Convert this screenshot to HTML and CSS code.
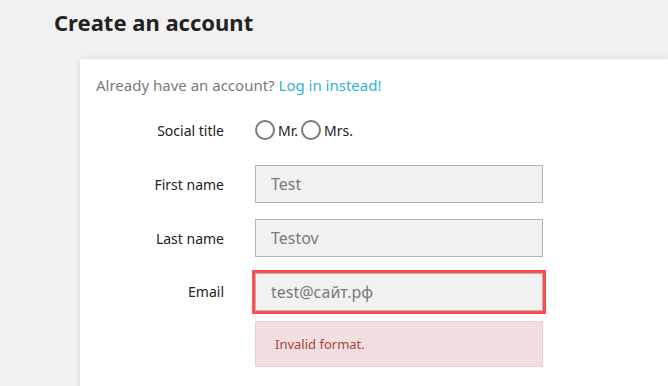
FILE: index.html
```html
<!DOCTYPE html>
<html lang="en">
<head>
<meta charset="utf-8">
<title>Create an account</title>
<link rel="stylesheet" href="styles.css">
</head>
<body>
<main class="page">
  <h1 class="page-title">Create an account</h1>
  <section class="card">
    <p class="login-hint">Already have an account? <a href="#" class="link">Log in instead!</a></p>
    <form class="form">
      <div class="row">
        <label class="label">Social title</label>
        <div class="field radios">
          <label class="radio"><span class="radio-dot"></span>Mr.</label>
          <label class="radio"><span class="radio-dot"></span>Mrs.</label>
        </div>
      </div>
      <div class="row">
        <label class="label">First name</label>
        <div class="field"><input class="input" type="text" value="Test"></div>
      </div>
      <div class="row">
        <label class="label">Last name</label>
        <div class="field"><input class="input" type="text" value="Testov"></div>
      </div>
      <div class="row row-email">
        <label class="label">Email</label>
        <div class="field">
          <input class="input input-error" type="text" value="test@сайт.рф">
          <div class="alert">Invalid format.</div>
        </div>
      </div>
    </form>
  </section>
</main>
</body>
</html>
```

FILE: styles.css
```css
* { box-sizing: border-box; }
html, body { margin: 0; padding: 0; }
body {
  background: #f1f1f1;
  font-family: "Noto Sans", sans-serif;
  color: #232323;
  overflow: hidden;
  height: 386px;
}
.page { padding: 6px 0 0 54px; }
.page-title {
  margin: 0;
  font-size: 22px;
  font-weight: 700;
  line-height: 32px;
  color: #232323;
}
.card {
  margin: 21px 0 0 26px;
  background: #fff;
  box-shadow: 2px 2px 8px 0 rgba(0,0,0,0.2);
  padding: 14px 16px 30px 16px;
}
.login-hint {
  margin: 0;
  font-size: 15px;
  line-height: 24px;
  color: #7a7a7a;
}
.link { color: #2fb5d2; text-decoration: none; }
.form { margin-top: 14px; }
.row {
  display: grid;
  grid-template-columns: 128px 288px;
  column-gap: 31px;
  align-items: center;
  margin-bottom: 16px;
}
.row:first-child { height: 38px; }
.row:last-child { margin-bottom: 0; }
.row-email { align-items: start; }
.row-email .label { line-height: 38px; }
.label {
  text-align: right;
  font-size: 14px;
  color: #232323;
}
.radios { display: flex; align-items: center; gap: 3px; }
.radio {
  display: flex;
  align-items: center;
  font-size: 14px;
  gap: 3px;
}
.radio-dot {
  width: 20px;
  height: 20px;
  border: 2px solid #7a7a7a;
  border-radius: 50%;
  background: #fff;
}
.input {
  display: block;
  width: 288px;
  height: 38px;
  background: #f1f1f1;
  border: 1px solid rgba(0,0,0,0.25);
  color: #7a7a7a;
  font-family: "Noto Sans", sans-serif;
  font-size: 16px;
  padding: 0 15px;
  margin: 0;
  outline: none;
}
.input-error { outline: 3px solid #ff4c4c; }
.alert {
  margin-top: 10px;
  height: 46px;
  background: #f2dede;
  border: 1px solid #ebcccc;
  color: #a94442;
  font-size: 13px;
  padding: 0 19px;
  display: flex;
  align-items: center;
}
```
